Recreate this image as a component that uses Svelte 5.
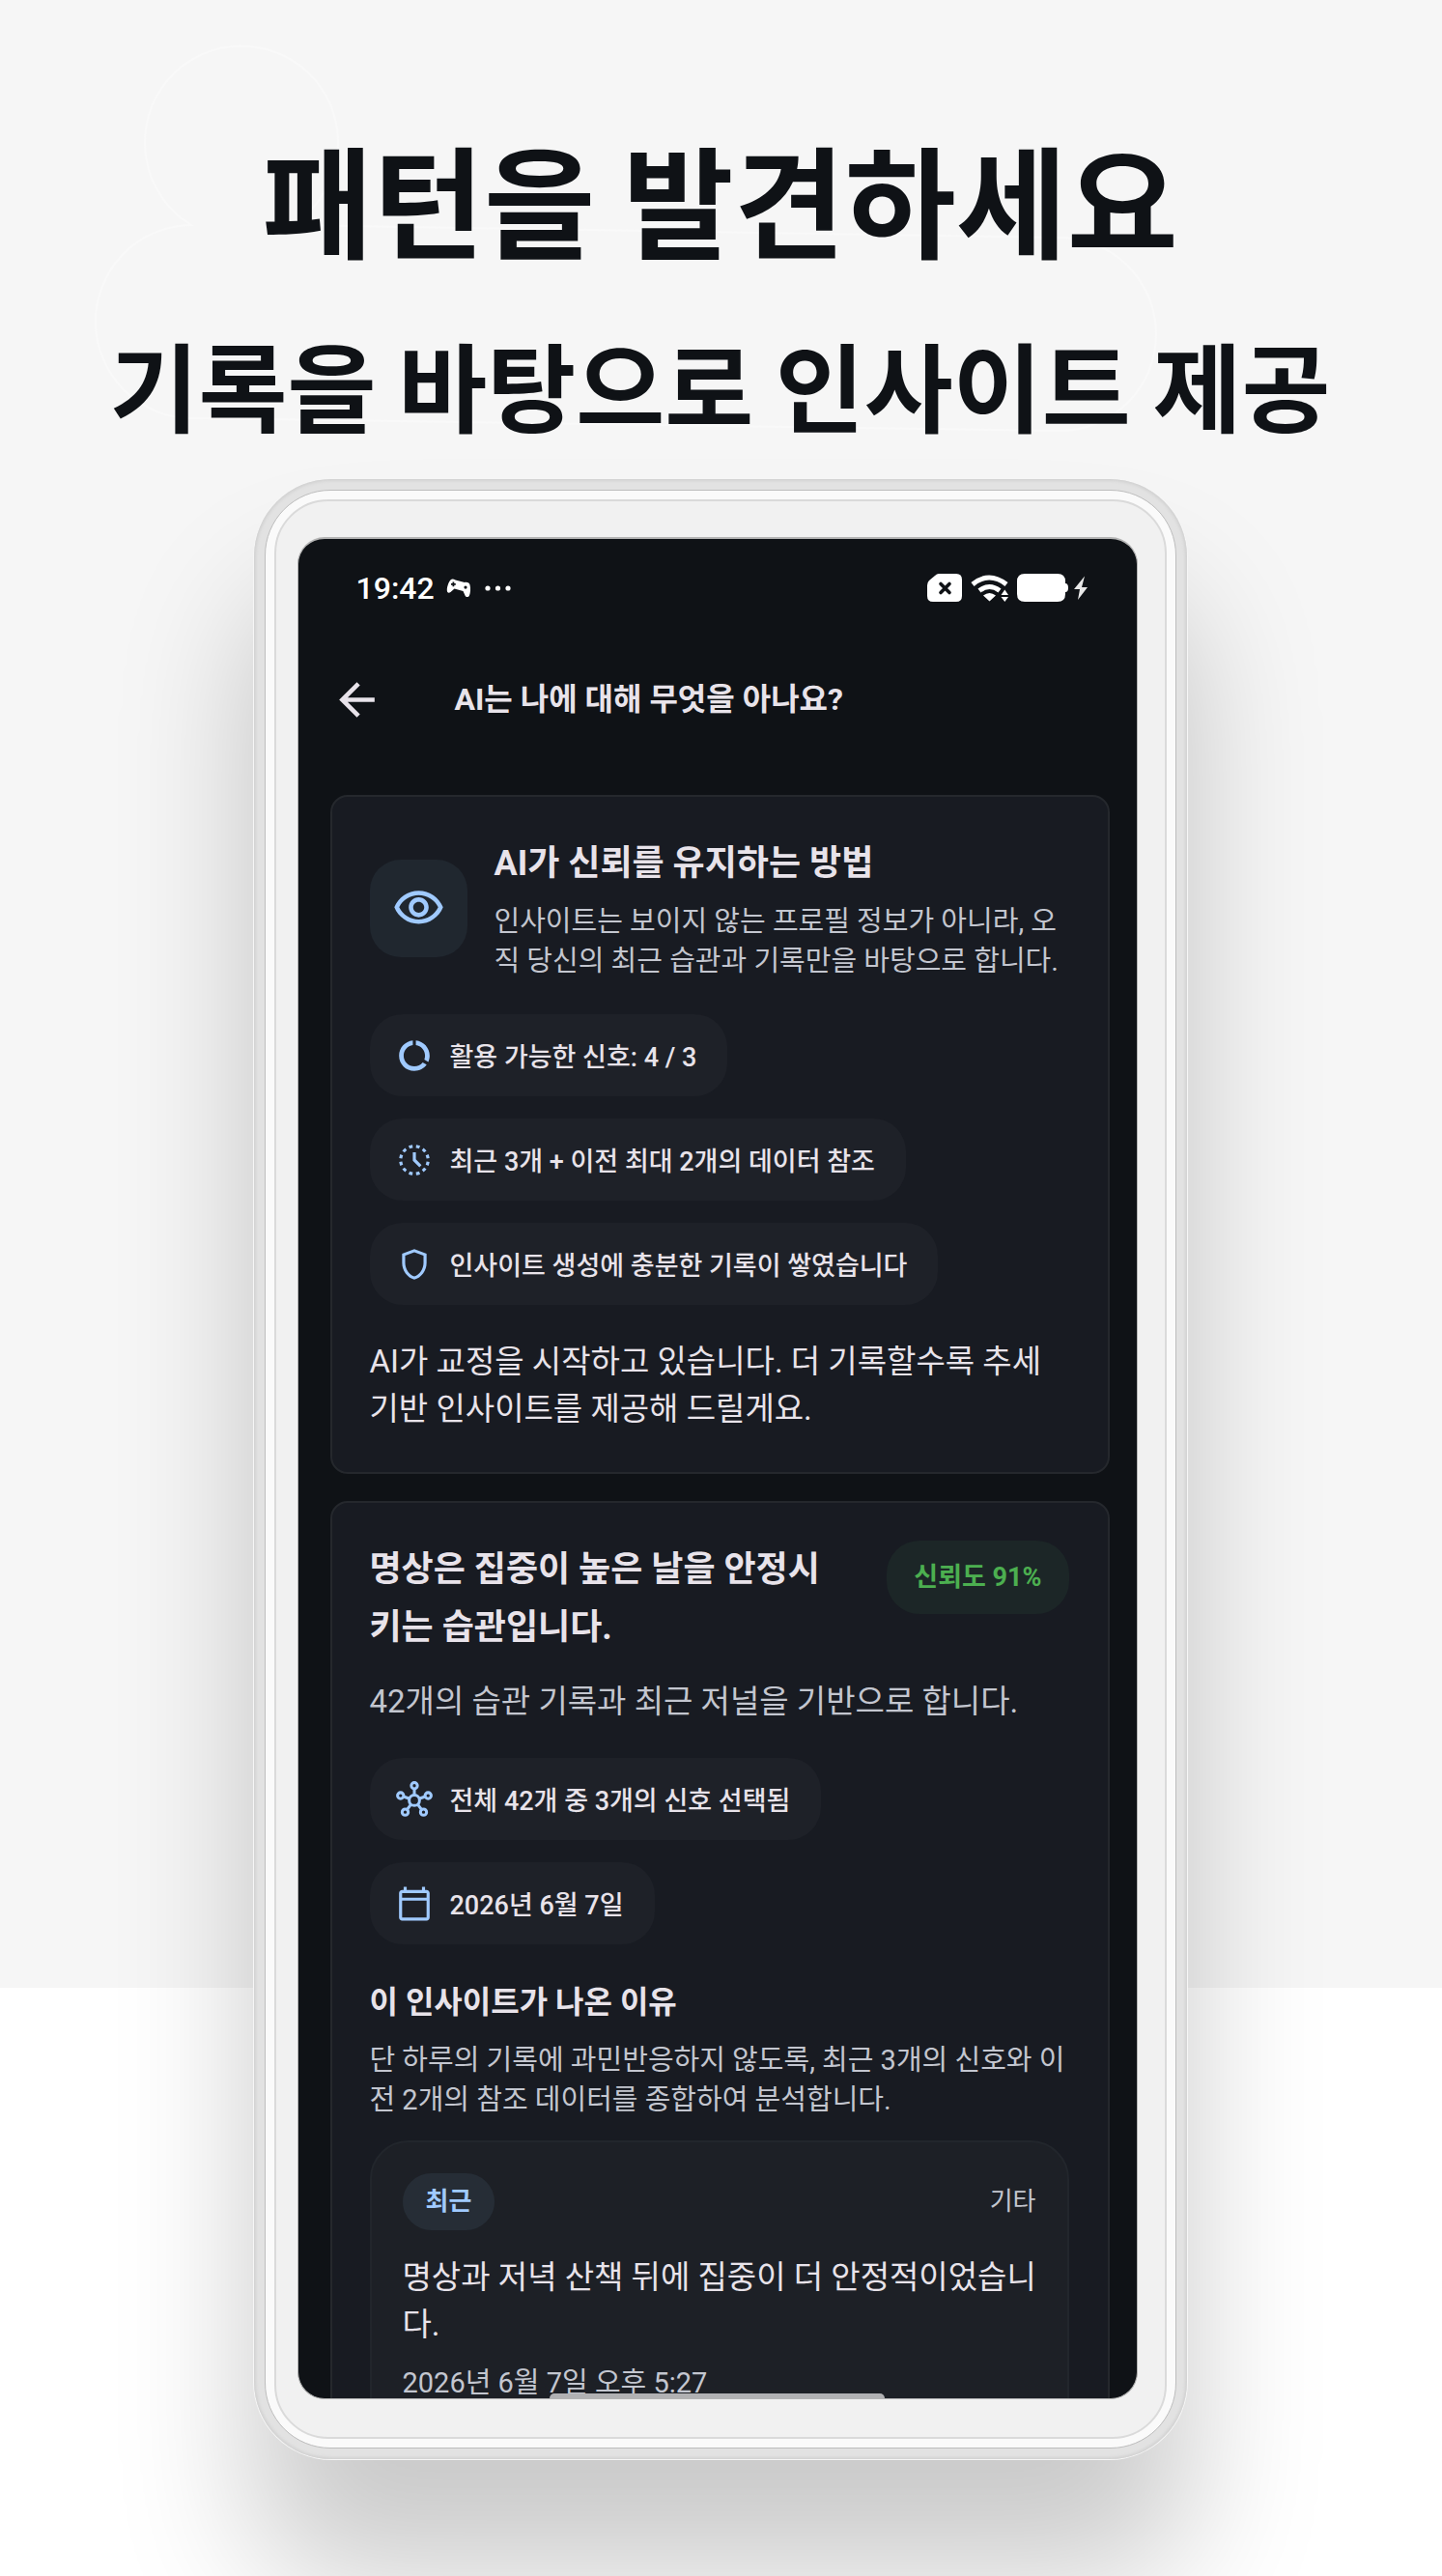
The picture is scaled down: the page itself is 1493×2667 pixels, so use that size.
<script>
  const signals = [
    { icon: 'usage', text: '활용 가능한 신호: 4 / 3' },
    { icon: 'history', text: '최근 3개 + 이전 최대 2개의 데이터 참조' },
    { icon: 'shield', text: '인사이트 생성에 충분한 기록이 쌓였습니다' },
  ];
  const facts = [
    { icon: 'hub', text: '전체 42개 중 3개의 신호 선택됨' },
    { icon: 'calendar', text: '2026년 6월 7일' },
  ];
</script>

{#snippet chip(item)}
  <li class="chip">
    <svg class="chip-icon" viewBox="0 0 24 24" aria-hidden="true">
      {#if item.icon === 'usage'}
        <path d="M13 2.05v3.03c3.39.49 6 3.39 6 6.92 0 .9-.18 1.75-.48 2.54l2.6 1.53c.56-1.24.88-2.62.88-4.07 0-5.18-3.95-9.45-9-9.95zM12 19c-3.87 0-7-3.13-7-7 0-3.53 2.61-6.43 6-6.92V2.05c-5.06.5-9 4.76-9 9.95 0 5.52 4.47 10 9.99 10 3.31 0 6.24-1.61 8.06-4.09l-2.6-1.53C16.17 17.98 14.21 19 12 19z" />
      {:else if item.icon === 'history'}
        <circle cx="12" cy="12" r="9" fill="none" stroke="currentColor" stroke-width="2" pathLength="120" stroke-dasharray="5 5" stroke-dashoffset="-2.5" />
        <path d="M11 7v5.4l4.3 4.3 1.4-1.4-3.7-3.7V7z" />
      {:else if item.icon === 'shield'}
        <path d="M12 2 4 5v6.09c0 5.05 3.41 9.76 8 10.91 4.59-1.15 8-5.86 8-10.91V5l-8-3zm6 9.09c0 4-2.55 7.7-6 8.83-3.45-1.13-6-4.82-6-8.83v-4.7l6-2.25 6 2.25v4.7z" />
      {:else if item.icon === 'hub'}
        <g fill="none" stroke="currentColor" stroke-width="1.9">
          <circle cx="12" cy="12.6" r="3.4" />
          <circle cx="12" cy="3" r="2" />
          <circle cx="3" cy="9.5" r="2" />
          <circle cx="21" cy="9.5" r="2" />
          <circle cx="6" cy="20.3" r="2" />
          <circle cx="18" cy="20.3" r="2" />
          <path d="M12 5v4.3M4.9 10.1l4 1.4M19.1 10.1l-4 1.4M7.2 18.7l2.6-3.500M16.800 18.700l-2.600-3.500" />
        </g>
      {:else}
        <path d="M20 3h-1V1h-2v2H7V1H5v2H4c-1.100 0-2 .9-2 2v16c0 1.100.9 2 2 2h16c1.100 0 2-.9 2-2V5c0-1.100-.9-2-2-2zm0 18H4V10h16v11zm0-13H4V5h16v3z" />
      {/if}
    </svg>
    <span>{item.text}</span>
  </li>
{/snippet}

<main class="poster">
  <svg class="cloud" viewBox="0 0 1493 480" aria-hidden="true">
    <path d="M302 233A100 100 0 1 0 198 233A100 100 0 0 0 200 433L1097 446A100 100 0 0 0 1097 246z" fill="none" stroke="#f9f9f9" stroke-width="2" />
  </svg>
  <header class="headline">
    <h1>패턴을 발견하세요</h1>
    <p>기록을 바탕으로 인사이트 제공</p>
  </header>

  <div class="phone">
    <div class="rim">
      <div class="bezel">
        <div class="screen">
          <div class="status">
            <time>19:42</time>
            <svg class="pad" viewBox="0 0 26 20" aria-hidden="true">
              <path fill="#fff" fill-rule="evenodd" d="M5 1C6 0 8 .5 9.500 1.500L19 4c3-.5 5 .5 5.500 2.500C25.500 10 25 15 24 17.500c-1 2-3.500 2-4.500 0L17.500 13 8.500 10.500 4.500 14C2.500 15.500.8 14.500.8 12 .8 8 3 2.500 5 1zM6.500 3.500v1.500H5v1.800h1.500v1.500h1.800V6.800h1.500V5H8.300V3.500zM20 7.500a1.600 1.600 0 1 0 0 3.200 1.600 1.600 0 0 0 0-3.200z" />
            </svg>
            <svg class="dots" viewBox="0 0 28 6" aria-hidden="true">
              <g fill="#fff"><circle cx="3" cy="3" r="2.600" /><circle cx="13.500" cy="3" r="2.600" /><circle cx="24" cy="3" r="2.600" /></g>
            </svg>
            <svg class="system" viewBox="0 0 168 30" aria-hidden="true">
              <path fill="#fff" d="M12 0h18q6 0 6 6v17q0 6-6 6H6q-6 0-6-6V12q0-3 2-5l6-5q2-2 4-2z" />
              <path d="m14 10.500 9 9m0-9-9 9" fill="none" stroke="#0f1216" stroke-width="3.600" stroke-linecap="round" />
              <g fill="none" stroke="#fff" stroke-width="5">
                <path d="M47 11q17-14 35 0" />
                <path d="M54 17.500q10.500-8 21 0" />
              </g>
              <path fill="#fff" d="M58 22.500q6.500-5 13 0L64.500 28.500zM76.500 22l3.800-5.500L84 22zM76.500 24h7.500l-3.700 5z" />
              <path fill="#fff" d="M101 0h34q8 0 8 8v2q3 0 3 4.500t-3 4.500v2q0 8-8 8h-34q-8 0-8-8V8q0-8 8-8z" />
              <path fill="#e8e8e8" d="M163 2.500 152 16h6l-2 11 10-13h-6z" />
            </svg>
          </div>

          <div class="appbar">
            <button class="back" type="button" aria-label="뒤로">
              <svg viewBox="0 0 24 24" aria-hidden="true"><path d="M20 11H7.830l5.590-5.590L12 4l-8 8 8 8 1.410-1.410L7.830 13H20v-2z" /></svg>
            </button>
            <h2>AI는 나에 대해 무엇을 아나요?</h2>
          </div>

          <section class="card">
            <div class="intro">
              <div class="eye">
                <svg viewBox="0 0 24 24" aria-hidden="true"><path d="M12 6c3.790 0 7.170 2.130 8.820 5.500C19.170 14.870 15.790 17 12 17s-7.170-2.130-8.820-5.500C4.830 8.130 8.210 6 12 6m0-2C7 4 2.730 7.110 1 11.500 2.730 15.890 7 19 12 19s9.270-3.110 11-7.500C21.270 7.110 17 4 12 4zm0 5c1.380 0 2.500 1.120 2.500 2.500S13.380 14 12 14s-2.500-1.120-2.500-2.500S10.620 9 12 9m0-2c-2.480 0-4.500 2.020-4.500 4.500S9.520 16 12 16s4.500-2.020 4.500-4.500S14.480 7 12 7z" /></svg>
              </div>
              <div class="intro-text">
                <h3>AI가 신뢰를 유지하는 방법</h3>
                <p class="small">인사이트는 보이지 않는 프로필 정보가 아니라, 오직 당신의 최근 습관과 기록만을 바탕으로 합니다.</p>
              </div>
            </div>
            <ul class="chips">
              {#each signals as item}{@render chip(item)}{/each}
            </ul>
            <p class="body">AI가 교정을 시작하고 있습니다. 더 기록할수록 추세 기반 인사이트를 제공해 드릴게요.</p>
          </section>

          <section class="card">
            <div class="insight">
              <h3>명상은 집중이 높은 날을 안정시키는 습관입니다.</h3>
              <span class="trust">신뢰도 91%</span>
            </div>
            <p class="body basis">42개의 습관 기록과 최근 저널을 기반으로 합니다.</p>
            <ul class="chips">
              {#each facts as item}{@render chip(item)}{/each}
            </ul>
            <h4>이 인사이트가 나온 이유</h4>
            <p class="small">단 하루의 기록에 과민반응하지 않도록, 최근 3개의 신호와 이전 2개의 참조 데이터를 종합하여 분석합니다.</p>
            <article class="entry">
              <div class="entry-head">
                <span class="tag">최근</span>
                <span class="kind">기타</span>
              </div>
              <p class="body">명상과 저녁 산책 뒤에 집중이 더 안정적이었습니다.</p>
              <time class="small">2026년 6월 7일 오후 5:27</time>
            </article>
          </section>
          <div class="homebar"></div>
        </div>
      </div>
    </div>
  </div>
</main>

<style>
  :global(body) {
    margin: 0;
    background: #fff;
  }
  h1, h2, h3, h4, p, ul {
    margin: 0;
    padding: 0;
  }
  .poster {
    position: relative;
    isolation: isolate;
    box-sizing: border-box;
    display: flex;
    flex-direction: column;
    align-items: center;
    min-height: 100vh;
    padding: 116px 2px 120px 0;
    overflow: hidden;
    background: linear-gradient(#f6f6f6 2058px, #fff 2058px);
    font-family: Roboto, "Noto Sans CJK KR", sans-serif;
    color: #e8e3ea;
  }
  .cloud {
    position: absolute;
    z-index: -1;
    top: 0;
    left: 0;
    width: 100%;
  }
  .headline {
    display: flex;
    flex-direction: column;
    gap: 27px;
    align-items: center;
    padding-bottom: 21px;
    color: #0f1216;
    font-family: "Noto Sans CJK KR", sans-serif;
    font-weight: 700;
    white-space: nowrap;
  }
  h1 {
    font-size: 125px;
    line-height: 176px;
    font-weight: 700;
  }
  .headline p {
    font-size: 100px;
    line-height: 156px;
  }
  .phone {
    box-sizing: border-box;
    width: 65%;
    max-width: 966px;
    padding: 11px;
    border-radius: 80px;
    background: #e2e2e2;
    box-shadow: inset 0 0 3px 2px #d2d2d2, 0 0 0 1px #f6f6f6, 0 120px 140px 0 rgba(0, 0, 0, 0.21);
  }
  .rim {
    padding: 9px;
    border: 1px solid #bdbdbd;
    border-radius: 68px;
    background: #fafafa;
  }
  .bezel {
    padding: 37px 28px 39px 22px;
    border: 2px solid #dadada;
    border-radius: 56px;
    background: #f1f1f1;
  }
  .screen {
    position: relative;
    box-sizing: border-box;
    height: 1928px;
    overflow: hidden;
    padding: 0 28px 0 33px;
    border: 1px solid #b4b4b4;
    border-top-width: 2px;
    border-radius: 28px;
    background: #0f1216;
  }
  .status {
    display: flex;
    align-items: center;
    height: 102px;
    padding: 0 21px 0 27px;
    color: #fff;
    font-size: 32px;
    font-weight: 500;
  }
  .pad {
    width: 26px;
    height: 20px;
    margin: 0 14px 0 12px;
  }
  .dots {
    width: 28px;
    height: 6px;
  }
  .system {
    width: 168px;
    height: 30px;
    margin-left: auto;
  }
  .appbar {
    display: flex;
    align-items: center;
    gap: 74px;
    height: 128px;
    padding-bottom: 35px;
  }
  .back {
    display: flex;
    padding: 0;
    border: 0;
    background: none;
  }
  .back svg {
    width: 55px;
    height: 55px;
    fill: #e8e3ea;
  }
  h2 {
    font-size: 32px;
    line-height: 50px;
    font-weight: 700;
  }
  .card {
    padding: 39px 40px 41px 39px;
    border: 2px solid #25282d;
    border-radius: 18px;
    background: #181b22;
  }
  .card + .card {
    margin-top: 28px;
  }
  .intro {
    display: flex;
    align-items: center;
    gap: 28px;
  }
  .eye {
    display: flex;
    flex: none;
    padding: 23px;
    border-radius: 32px;
    background: #20272f;
  }
  .eye svg {
    width: 55px;
    height: 55px;
    fill: #a0caff;
  }
  h3 {
    font-size: 36px;
    line-height: 60px;
    font-weight: 700;
  }
  .small {
    color: #c3c6cf;
    font-size: 29px;
    line-height: 41px;
  }
  .intro .small {
    margin-top: 10px;
  }
  .body {
    font-size: 33px;
    line-height: 49px;
  }
  .chips {
    display: flex;
    flex-direction: column;
    align-items: flex-start;
    gap: 23px;
    margin: 34px 0 34px;
    list-style: none;
  }
  .chip {
    display: flex;
    align-items: center;
    gap: 18px;
    height: 85px;
    padding: 0 32px 0 27px;
    border-radius: 34px;
    background: #1e2128;
    font-size: 27px;
    font-weight: 500;
  }
  .chip-icon {
    width: 38px;
    height: 38px;
    overflow: visible;
    color: #a0caff;
    fill: currentColor;
  }
  .insight {
    display: flex;
    align-items: flex-start;
    gap: 42px;
  }
  .insight h3 {
    flex: 1;
  }
  .trust {
    padding: 0 28px;
    border-radius: 34px;
    background: #1c2627;
    color: #4caf50;
    font-size: 27px;
    line-height: 76px;
    font-weight: 700;
  }
  .basis {
    margin-top: 22px;
    color: #c3c6cf;
  }
  h4 {
    margin: 35px 0 15px;
    font-size: 32px;
    line-height: 50px;
    font-weight: 700;
  }
  .entry {
    margin-top: 21px;
    padding: 32px 28px 32px 32px;
    border: 2px solid #22262c;
    border-radius: 40px;
    background: #1d2026;
  }
  .entry-head {
    display: flex;
    align-items: center;
    justify-content: space-between;
    margin-bottom: 24px;
    padding-right: 4px;
    font-size: 26px;
    line-height: 59px;
  }
  .tag {
    padding: 0 24px;
    border-radius: 30px;
    background: #262d36;
    color: #a0caff;
    font-weight: 700;
  }
  .kind {
    color: #c3c6cf;
  }
  .entry .small {
    display: block;
    margin-top: 16px;
  }
  .homebar {
    position: absolute;
    bottom: 0;
    left: 30%;
    width: 40%;
    height: 5px;
    border-radius: 5px 5px 0 0;
    background: #b1b1b3;
  }
</style>
